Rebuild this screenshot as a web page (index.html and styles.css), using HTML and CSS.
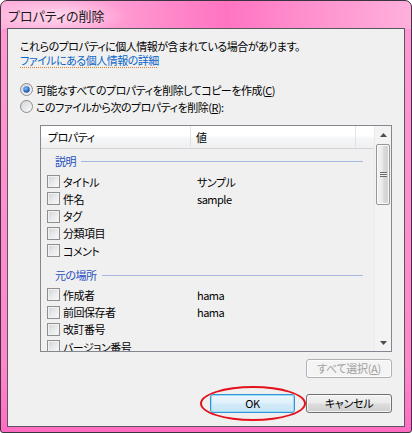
FILE: index.html
```html
<!DOCTYPE html>
<html lang="ja">
<head>
<meta charset="utf-8">
<title>プロパティの削除</title>
<link rel="stylesheet" href="styles.css">
</head>
<body>
<div class="window">
  <div class="titlebar"><span class="title">プロパティの削除</span></div>
  <div class="client">
    <p class="msg">これらのプロパティに個人情報が含まれている場合があります。</p>
    <a class="link">ファイルにある個人情報の詳細</a>
    <div class="radios">
      <div class="radio">
        <svg width="13" height="13" viewBox="0 0 13 13">
          <defs>
            <linearGradient id="rg" x1="0" y1="0" x2="1" y2="1"><stop offset="0" stop-color="#d2d4d8"/><stop offset="1" stop-color="#fbfbfb"/></linearGradient>
            <radialGradient id="dot" cx="0.4" cy="0.35" r="0.7"><stop offset="0" stop-color="#8fc2f4"/><stop offset="0.6" stop-color="#2c6fcd"/><stop offset="1" stop-color="#1d4f9c"/></radialGradient>
          </defs>
          <circle cx="6.5" cy="6.5" r="6" fill="url(#rg)" stroke="#8a8c8e"/>
          <circle cx="6.5" cy="6.5" r="3.2" fill="url(#dot)"/>
        </svg>
        <span>可能なすべてのプロパティを削除してコピーを作成(<u>C</u>)</span>
      </div>
      <div class="radio">
        <svg width="13" height="13" viewBox="0 0 13 13">
          <circle cx="6.5" cy="6.5" r="6" fill="url(#rg)" stroke="#8a8c8e"/>
        </svg>
        <span>このファイルから次のプロパティを削除(<u>R</u>):</span>
      </div>
    </div>
    <div class="list">
      <div class="list-main">
        <div class="header">
          <div class="hcell hprop">プロパティ</div>
          <div class="hcell hval">値</div>
          <div class="hcell hrest"></div>
        </div>
        <div class="group"><span>説明</span><i class="rule"></i></div>
        <div class="row"><span class="cell"><span class="cb"></span>タイトル</span><span class="val">サンプル</span></div>
        <div class="row"><span class="cell"><span class="cb"></span>件名</span><span class="val">sample</span></div>
        <div class="row"><span class="cell"><span class="cb"></span>タグ</span><span class="val"></span></div>
        <div class="row"><span class="cell"><span class="cb"></span>分類項目</span><span class="val"></span></div>
        <div class="row"><span class="cell"><span class="cb"></span>コメント</span><span class="val"></span></div>
        <div class="group group-gap"><span>元の場所</span><i class="rule"></i></div>
        <div class="row"><span class="cell"><span class="cb"></span>作成者</span><span class="val">hama</span></div>
        <div class="row"><span class="cell"><span class="cb"></span>前回保存者</span><span class="val">hama</span></div>
        <div class="row"><span class="cell"><span class="cb"></span>改訂番号</span><span class="val"></span></div>
        <div class="row"><span class="cell"><span class="cb"></span>バージョン番号</span><span class="val"></span></div>
      </div>
      <div class="scrollbar">
        <div class="sb-btn"><svg width="7" height="4" viewBox="0 0 7 4"><path d="M0 4 L3.5 0 L7 4 Z" fill="#4d4d4d"/></svg></div>
        <div class="sb-thumb"><span class="grip"></span></div>
        <div class="sb-track"></div>
        <div class="sb-btn"><svg width="7" height="4" viewBox="0 0 7 4"><path d="M0 0 L3.5 4 L7 0 Z" fill="#4d4d4d"/></svg></div>
      </div>
    </div>
    <div class="select-row"><button class="btn btn-disabled">すべて選択(<u>A</u>)</button></div>
    <div class="actions">
      <button class="btn btn-ok">OK<span class="annot"></span></button>
      <button class="btn btn-cancel">キャンセル</button>
    </div>
  </div>
</div>
</body>
</html>
```
FILE: styles.css
```css
* { box-sizing: border-box; margin: 0; padding: 0; }
html, body { width: 412px; height: 433px; }
body {
  margin: 0;
  background: #ffffff;
  font-family: "Noto Sans CJK JP", "Noto Sans", sans-serif;
  font-size: 11px;
  letter-spacing: -0.5px;
  color: #000;
  font-feature-settings: "palt";
  overflow: hidden;
}
.window {
  width: 412px;
  height: 433px;
  border: 1px solid #3b3440;
  border-radius: 7px 7px 3px 3px;
  background:
    radial-gradient(ellipse 70px 18px at 58px 15px, rgba(255,255,255,0.55), rgba(255,255,255,0) 100%),
    linear-gradient(90deg, #ffb2dc 0%, #ffa0d5 25%, #ff74c1 55%, #ff8acb 70%, #ffb0dc 100%) top / 100% 28px no-repeat,
    linear-gradient(180deg, #ff9ad3 0%, #ff86cb 85%, #ff6cc2 100%);
  padding: 0 6px 5px;
  display: flex;
  flex-direction: column;
}
.titlebar {
  height: 27px;
  display: flex;
  align-items: center;
  padding-left: 1px;
}
.title {
  font-size: 13px;
  letter-spacing: 0;
  color: #1b1b1b;
  line-height: 16px;
  padding-top: 2px;
}
.client {
  flex: 1;
  background: #f0f0f0;
  border: 1px solid #5b5560;
  padding: 10px 12px 0 12px;
  display: flex;
  flex-direction: column;
}
.msg { line-height: 14px; }
.link {
  display: block;
  width: fit-content;
  line-height: 14px;
  color: #0a64c8;
  text-decoration: underline dotted #d8843c;
  text-underline-offset: 2px;
}
.radios { margin-top: 14px; display: flex; flex-direction: column; }
.radio { height: 17px; display: flex; align-items: center; gap: 3px; line-height: 14px; }
.radio svg { flex: none; }
.list {
  margin: 10px 0 0 20px;
  height: 227px;
  border: 1px solid #828790;
  display: flex;
  background: #f0f0f0;
  overflow: hidden;
}
.list-main { flex: 1; display: flex; flex-direction: column; overflow: hidden; }
.header {
  height: 23px;
  flex: none;
  display: flex;
  background: linear-gradient(180deg, #ffffff 0%, #ffffff 45%, #f5f6f7 55%, #eff0f2 100%);
  border-bottom: 1px solid #d5d5d5;
}
.hcell { display: flex; align-items: center; line-height: 14px; border-right: 1px solid #e2e3e6; }
.hprop { width: 150px; padding-left: 7px; }
.hval { width: 165px; padding-left: 5px; }
.hrest { flex: 1; border-right: none; }
.group {
  height: 24px;
  flex: none;
  display: flex;
  align-items: center;
  padding: 0 11px 0 14px;
  color: #1f4fbf;
  line-height: 14px;
}
.group-gap { height: 27px; padding-top: 5px; }
.rule { flex: 1; height: 1px; background: #a5b8de; margin-left: 5px; }
.row {
  height: 17.25px;
  flex: none;
  display: grid;
  grid-template-columns: 156px 1fr;
  align-items: center;
  line-height: 14px;
}
.cell { display: flex; align-items: center; padding-left: 6px; gap: 3px; white-space: nowrap; }
.cb {
  width: 13px;
  height: 13px;
  flex: none;
  border: 1px solid #8e8f8f;
  background: linear-gradient(135deg, #d0d2d5 0%, #e8e9eb 50%, #fafafa 100%);
  box-shadow: inset 0 0 0 1px #f2f2f2;
}
.scrollbar {
  width: 17px;
  flex: none;
  display: flex;
  flex-direction: column;
  background: #f3f3f3;
  border-left: 1px solid #ececec;
}
.sb-btn { height: 17px; flex: none; display: flex; align-items: center; justify-content: center; }
.sb-thumb {
  height: 61px;
  margin: 1px 1px 0 1px;
  border: 1px solid #979797;
  border-radius: 2px;
  background: linear-gradient(90deg, #f4f4f4 0%, #e9e9e9 50%, #dadada 55%, #d2d2d2 100%);
  box-shadow: inset 0 0 0 1px #f9f9f9;
  display: flex;
  align-items: center;
  justify-content: center;
}
.grip {
  width: 7px;
  height: 5px;
  border-top: 1px solid #6a6a6a;
  border-bottom: 1px solid #6a6a6a;
  background: linear-gradient(#f0f0f0 0, #f0f0f0 1px, #6a6a6a 1px, #6a6a6a 2px, #f0f0f0 2px);
  background-size: 100% 3px;
  background-position: 0 0;
}
.sb-track { flex: 1; }
.select-row { margin-top: 7px; display: flex; justify-content: flex-end; }
.actions { margin-top: 16px; display: flex; justify-content: flex-end; gap: 11px; }
.btn {
  font-family: inherit;
  font-size: 11px;
  letter-spacing: -0.3px;
  font-feature-settings: "palt";
  height: 19px;
  line-height: 15px;
  border: 1px solid #707070;
  border-radius: 3px;
  background: linear-gradient(180deg, #f2f2f2 0%, #ebebeb 48%, #dddddd 52%, #cfcfcf 100%);
  box-shadow: inset 0 0 0 1px rgba(255,255,255,0.7);
  color: #000;
  position: relative;
  padding: 0;
}
.btn-disabled {
  width: 86px;
  border-color: #adb2b5;
  background: #f4f4f4;
  color: #a0a0a0;
}
.btn-ok {
  width: 85px;
  border-color: #3393d6;
  box-shadow: inset 0 0 0 1px #9ddcf7;
  background: linear-gradient(180deg, #eaf6fd 0%, #e0f1fb 48%, #d2ebf8 52%, #c8e5f6 100%);
}
.btn-cancel { width: 86px; }
.annot {
  position: absolute;
  left: -11px;
  top: -9px;
  width: 106px;
  height: 35px;
  border: 2px solid #e3121b;
  border-radius: 50%;
  pointer-events: none;
}
```
